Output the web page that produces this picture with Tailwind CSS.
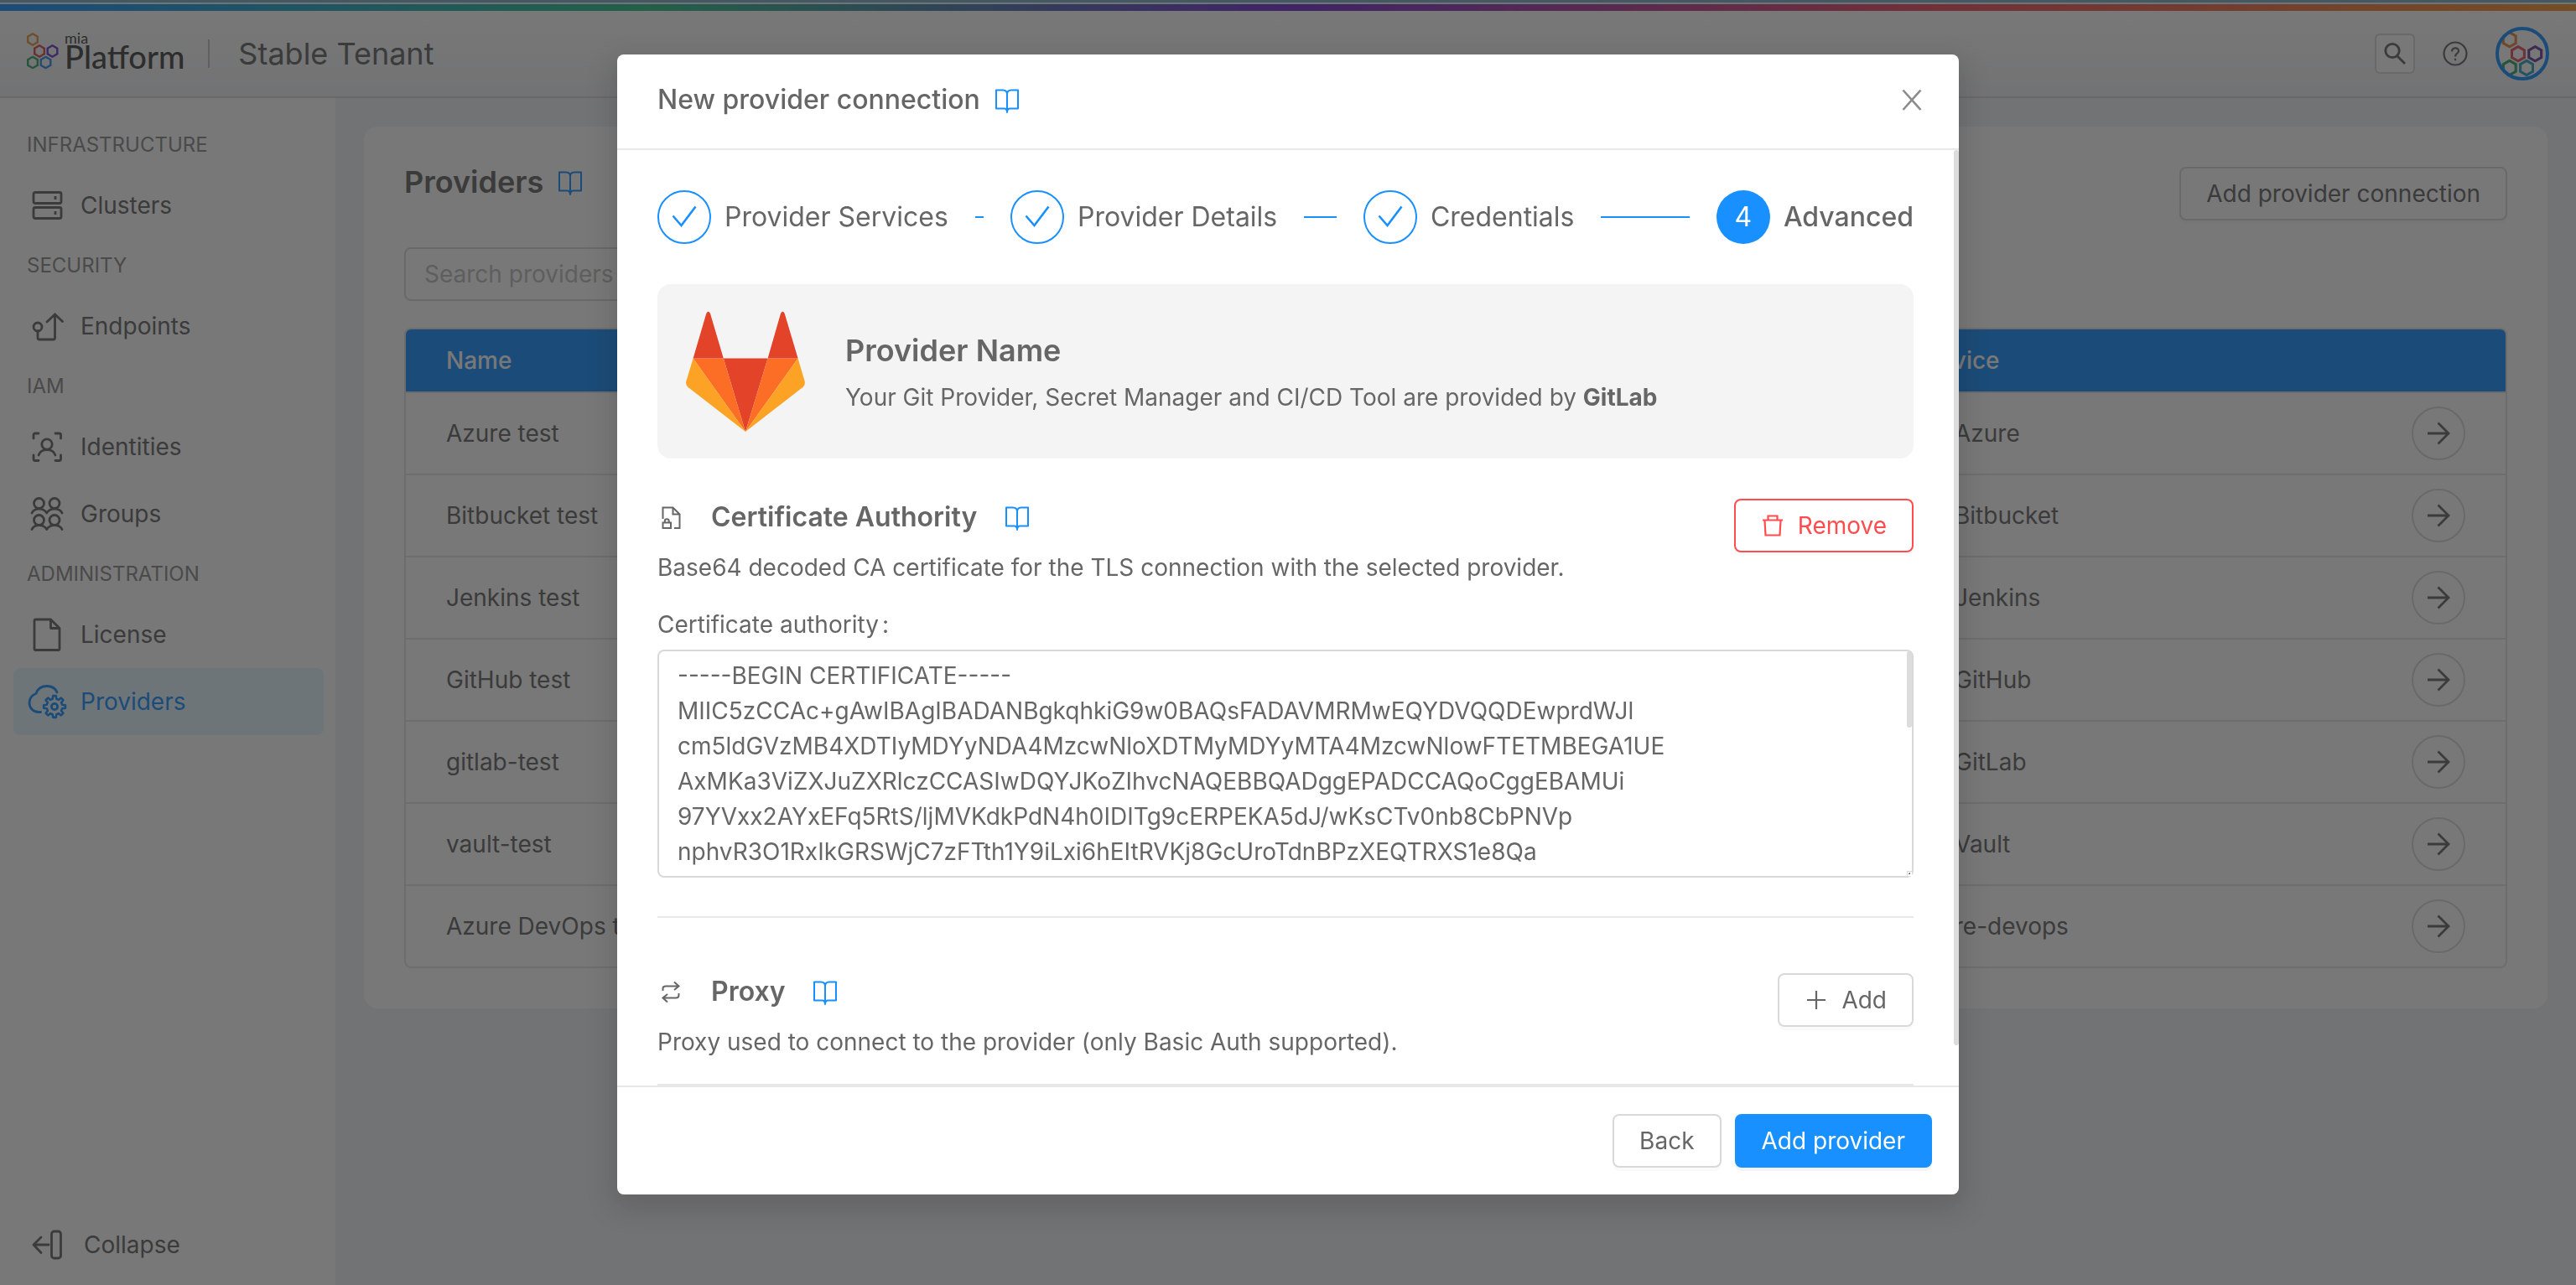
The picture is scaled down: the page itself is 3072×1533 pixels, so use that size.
<!DOCTYPE html>
<html lang="en">
<head>
<meta charset="utf-8">
<title>Stable Tenant - Providers</title>
<script src="https://cdn.jsdelivr.net/npm/@tailwindcss/browser@4"></script>
</head>
<body class="min-h-screen bg-[#f0f2f5] font-['Inter',sans-serif] text-[28px] leading-[44px] text-[#666666]">

<svg class="hidden" aria-hidden="true">
  <symbol id="book" viewBox="0 0 32 32"><path fill="none" stroke="currentColor" stroke-width="2" stroke-linejoin="round" d="M16 9.500C16 6.500 14 4.500 11 4.500H3V26.500H12.500C15 26.500 16 28 16 31C16 28 17 26.500 19.500 26.500H29V4.500H21C18 4.500 16 6.500 16 9.500ZM16 9V31"/></symbol>
  <symbol id="arrow" viewBox="0 0 32 32"><path fill="none" stroke="currentColor" stroke-width="2.800" d="M3 16H28M15.500 3.500 28 16 15.500 28.500"/></symbol>
  <symbol id="check" viewBox="0 0 32 32"><path fill="none" stroke="currentColor" stroke-width="2.600" d="M2.500 14.500 12.500 26 29.500 3.500"/></symbol>
  <symbol id="hex" viewBox="-8 -8 16 16"><path fill="none" stroke="currentColor" stroke-width="2.400" d="M0 -6.700 5.800 -3.350V3.350L0 6.700 -5.800 3.350V-3.350Z"/></symbol>
</svg>

<div class="flex min-h-screen flex-col">
  <div class="h-[3px] bg-[#7fafc5]"></div>
  <div class="h-[2px] bg-[#e6f7ff]"></div>
  <div class="h-2 [background-image:linear-gradient(90deg,#1890ff_0%,#2ac387_25%,#722ed1_50%,#f04a60_75%,#f5962d_100%)]"></div>
  <header class="flex h-[104px] items-center border-b-2 border-[#d9d9d9] bg-linear-to-b from-white to-[#f0f2f5] px-8">
    <a href="#" class="flex items-center text-[#444444]" aria-label="mia Platform">
      <svg class="mb-1 h-[46px] w-[39px]" viewBox="0 0 39 46" aria-hidden="true">
        <use href="#hex" x="-1" y="0" width="16" height="16" class="text-[#e8973c]"/>
        <use href="#hex" x="7" y="14" width="16" height="16" class="text-[#e0494f]"/>
        <use href="#hex" x="22.500" y="14" width="16" height="16" class="text-[#6a3bd0]"/>
        <use href="#hex" x="-1" y="27.500" width="16" height="16" class="text-[#34a866]"/>
        <use href="#hex" x="14.500" y="27.500" width="16" height="16" class="text-[#2f8fe8]"/>
      </svg>
      <span class="flex flex-col pb-[10px] pl-[6px] font-['Lato',sans-serif]">
        <span class="text-[18px] leading-4">mia</span>
        <span class="text-[38px] leading-7 font-medium">Platform</span>
      </span>
    </a>
    <span class="mr-[34px] ml-7 h-[34px] w-[2px] bg-[#c4c4c4]"></span>
    <span class="text-[36px]">Stable Tenant</span>
    <div class="ml-auto flex items-center gap-8">
      <button class="grid size-12 place-items-center rounded-md border-2 border-[#d9d9d9] bg-white" aria-label="Search">
        <svg class="size-7" viewBox="0 0 28 28" fill="none" stroke="currentColor" stroke-width="2.800" aria-hidden="true"><circle cx="11" cy="10.500" r="8.200"/><path d="M16.500 16.500 26 26"/></svg>
      </button>
      <button class="grid size-8 place-items-center" aria-label="Help">
        <svg class="size-8" viewBox="0 0 32 32" fill="none" stroke="currentColor" stroke-width="2.200" aria-hidden="true"><circle cx="16" cy="16" r="13.500"/><path d="M12 13.500C12 8 20 8 20 13C20 16 16 15.500 16 19.500"/><path d="M16 21.800v2.400"/></svg>
      </button>
      <button class="size-16" aria-label="Account">
        <svg class="size-16" viewBox="0 0 64 64" aria-hidden="true">
          <defs><clipPath id="avatar"><circle cx="32" cy="32" r="30"/></clipPath></defs>
          <circle cx="32" cy="32" r="30" fill="#fff"/>
          <g clip-path="url(#avatar)">
            <use href="#hex" x="6.500" y="5" width="20.500" height="20.500" class="text-[#e8873c]"/>
            <use href="#hex" x="16.700" y="22" width="20.500" height="20.500" class="text-[#e55064]"/>
            <use href="#hex" x="37" y="22" width="20.500" height="20.500" class="text-[#6b3f9e]"/>
            <use href="#hex" x="6.500" y="38.700" width="20.500" height="20.500" class="text-[#2ea866]"/>
            <use href="#hex" x="26.800" y="38.700" width="20.500" height="20.500" class="text-[#2ba5c4]"/>
          </g>
          <circle cx="32" cy="32" r="30" fill="none" stroke="#1890ff" stroke-width="4"/>
        </svg>
      </button>
    </div>
  </header>

  <div class="flex flex-1">
    <aside class="flex w-[400px] shrink-0 flex-col bg-white">
      <nav class="flex flex-1 flex-col pt-6">
        <h2 class="flex h-16 items-center pl-8 text-[24px] text-[#8c8c8c]">INFRASTRUCTURE</h2>
        <a href="#" class="mr-[14px] ml-4 flex h-20 items-center gap-5 rounded-lg pl-5">
          <svg class="size-10" viewBox="0 0 40 40" fill="none" stroke="currentColor" stroke-width="2.800" aria-hidden="true"><rect x="4" y="4.500" width="33" height="13" rx="2"/><rect x="4" y="22.500" width="33" height="13" rx="2"/><path d="M30 9v4M30 27v4"/></svg>
          Clusters</a>
        <h2 class="flex h-16 items-center pl-8 text-[24px] text-[#8c8c8c]">SECURITY</h2>
        <a href="#" class="mr-[14px] ml-4 flex h-20 items-center gap-5 rounded-lg pl-5">
          <svg class="size-10" viewBox="0 0 40 40" fill="none" stroke="currentColor" stroke-width="2.800" stroke-linecap="round" stroke-linejoin="round" aria-hidden="true"><circle cx="9" cy="21" r="5"/><path d="M9 26V34Q9 36 11 36H27.500Q29.500 36 29.500 34V6M20 15 29.500 6 38.500 14.500"/></svg>
          Endpoints</a>
        <h2 class="flex h-16 items-center pl-8 text-[24px] text-[#8c8c8c]">IAM</h2>
        <a href="#" class="mr-[14px] ml-4 flex h-20 items-center gap-5 rounded-lg pl-5">
          <svg class="size-10" viewBox="0 0 40 40" fill="none" stroke="currentColor" stroke-width="2.800" stroke-linecap="round" stroke-linejoin="round" aria-hidden="true"><path d="M4 10V6Q4 4 6 4H10M30 4H34.500Q36.500 4 36.500 6V10M4 30V34.500Q4 36.500 6 36.500H10M30 36.500H34.500Q36.500 36.500 36.500 34.500V30"/><circle cx="20" cy="17" r="6.200"/><path d="M10 30C13 21.500 27 21.500 30 30"/></svg>
          Identities</a>
        <a href="#" class="mr-[14px] ml-4 flex h-20 items-center gap-5 rounded-lg pl-5">
          <svg class="size-10" viewBox="0 0 40 40" fill="none" stroke="currentColor" stroke-width="2.800" stroke-linecap="round" stroke-linejoin="round" aria-hidden="true"><circle cx="10.500" cy="7.500" r="6"/><circle cx="29" cy="7.500" r="6"/><path d="M2 19C5 12.500 16 12.500 19.700 19C23.500 12.500 35 12.500 38 19"/><circle cx="10.500" cy="27.500" r="6"/><circle cx="29" cy="27.500" r="6"/><path d="M2 38.500C5 32 16 32 19.700 38.500C23.500 32 35 32 38 38.500"/></svg>
          Groups</a>
        <h2 class="flex h-16 items-center pl-8 text-[24px] text-[#8c8c8c]">ADMINISTRATION</h2>
        <a href="#" class="mr-[14px] ml-4 flex h-20 items-center gap-5 rounded-lg pl-5">
          <svg class="size-10" viewBox="0 0 40 40" fill="none" stroke="currentColor" stroke-width="2.800" stroke-linejoin="round" aria-hidden="true"><path d="M5 3.500Q5 2 6.500 2H24.500L35 12.500V37Q35 38.500 33.500 38.500H6.500Q5 38.500 5 37ZM24.500 2V12.500H35"/></svg>
          License</a>
        <a href="#" aria-current="page" class="mr-[14px] ml-4 flex h-20 items-center gap-5 rounded-lg bg-[#e6f7ff] pl-5 text-[#1890ff]">
          <svg class="size-10 overflow-visible" viewBox="0 0 40 40" fill="none" stroke="currentColor" stroke-width="2.800" stroke-linecap="round" stroke-linejoin="round" aria-hidden="true"><path d="M12.500 32.500H10C3.500 32.500 -1 27.500 -1 21.500C-1 15.500 3 11.500 7 10.500C9 4.500 14 1.500 20 1.500C26 1.500 30 4 32 9"/><g transform="translate(29 26)"><path stroke-width="2.600" d="M9.200 -2.300 12.900 -1.800 12.900 1.800 9.200 2.300 8.100 4.900 10.400 7.800 7.800 10.400 4.900 8.100 2.300 9.200 1.800 12.900 -1.800 12.900 -2.300 9.200 -4.900 8.100 -7.800 10.400 -10.400 7.800 -8.100 4.900 -9.200 2.300 -12.900 1.800 -12.900 -1.800 -9.200 -2.300 -8.100 -4.900 -10.400 -7.800 -7.800 -10.400 -4.900 -8.100 -2.300 -9.200 -1.800 -12.900 1.800 -12.900 2.300 -9.200 4.900 -8.100 7.800 -10.400 10.400 -7.800 8.100 -4.900Z"/><circle r="3.600"/></g></svg>
          Providers</a>
      </nav>
      <button class="flex h-24 items-center gap-6 pl-9 text-left">
        <svg class="size-10" viewBox="0 0 40 40" fill="none" stroke="currentColor" stroke-width="2.800" stroke-linecap="round" stroke-linejoin="round" aria-hidden="true"><path d="M13 11 4 20 13 29.500M4 20H22"/><rect x="25.500" y="4" width="11" height="32" rx="3"/></svg>
        Collapse
      </button>
    </aside>

    <main class="min-w-0 flex-1 p-[34px]">
      <section class="rounded-2xl bg-white p-12">
        <div class="flex h-24 items-start justify-between">
          <div class="flex items-center gap-4">
            <h1 class="text-[36px] leading-9 font-semibold">Providers</h1>
            <a href="#" class="text-[#1890ff]" aria-label="Documentation"><svg class="size-8" aria-hidden="true"><use href="#book"/></svg></a>
          </div>
          <button class="h-16 rounded-lg border-2 border-[#d9d9d9] bg-white px-[30px] shadow-[0_4px_0_rgba(0,0,0,0.02)]">Add provider connection</button>
        </div>
        <input type="text" aria-label="Search providers" placeholder="Search providers" class="mb-8 block h-16 w-[480px] rounded-lg border-2 border-[#d9d9d9] bg-white px-[22px] placeholder:text-[#bfbfbf]">
        <div class="overflow-hidden rounded-lg border-2 border-[#e4e4e4]">
          <table class="w-full table-fixed text-left">
            <colgroup><col class="w-1/4"><col><col class="w-[753px]"></colgroup>
            <thead class="bg-[#1890ff] text-white">
              <tr class="h-[75px] border-b-2 border-[#e4e4e4]"><th class="pl-12 font-medium">Name</th><th></th><th class="pl-12 font-medium">Service</th></tr>
            </thead>
            <tbody>
              <tr class="h-[98px] border-b-2 border-[#e4e4e4]"><td class="pl-12 whitespace-nowrap">Azure test</td><td></td><td class="px-12"><div class="flex items-center gap-4"><span class="size-8"></span>Azure<button class="ml-auto grid size-16 place-items-center rounded-full border-2 border-[#d9d9d9]" aria-label="Open Azure test"><svg class="size-8" aria-hidden="true"><use href="#arrow"/></svg></button></div></td></tr>
              <tr class="h-[98px] border-b-2 border-[#e4e4e4]"><td class="pl-12 whitespace-nowrap">Bitbucket test</td><td></td><td class="px-12"><div class="flex items-center gap-4"><span class="size-8"></span>Bitbucket<button class="ml-auto grid size-16 place-items-center rounded-full border-2 border-[#d9d9d9]" aria-label="Open Bitbucket test"><svg class="size-8" aria-hidden="true"><use href="#arrow"/></svg></button></div></td></tr>
              <tr class="h-[98px] border-b-2 border-[#e4e4e4]"><td class="pl-12 whitespace-nowrap">Jenkins test</td><td></td><td class="px-12"><div class="flex items-center gap-4"><span class="size-8"></span>Jenkins<button class="ml-auto grid size-16 place-items-center rounded-full border-2 border-[#d9d9d9]" aria-label="Open Jenkins test"><svg class="size-8" aria-hidden="true"><use href="#arrow"/></svg></button></div></td></tr>
              <tr class="h-[98px] border-b-2 border-[#e4e4e4]"><td class="pl-12 whitespace-nowrap">GitHub test</td><td></td><td class="px-12"><div class="flex items-center gap-4"><span class="size-8"></span>GitHub<button class="ml-auto grid size-16 place-items-center rounded-full border-2 border-[#d9d9d9]" aria-label="Open GitHub test"><svg class="size-8" aria-hidden="true"><use href="#arrow"/></svg></button></div></td></tr>
              <tr class="h-[98px] border-b-2 border-[#e4e4e4]"><td class="pl-12 whitespace-nowrap">gitlab-test</td><td></td><td class="px-12"><div class="flex items-center gap-4"><span class="size-8"></span>GitLab<button class="ml-auto grid size-16 place-items-center rounded-full border-2 border-[#d9d9d9]" aria-label="Open gitlab-test"><svg class="size-8" aria-hidden="true"><use href="#arrow"/></svg></button></div></td></tr>
              <tr class="h-[98px] border-b-2 border-[#e4e4e4]"><td class="pl-12 whitespace-nowrap">vault-test</td><td></td><td class="px-12"><div class="flex items-center gap-4"><span class="size-8"></span>Vault<button class="ml-auto grid size-16 place-items-center rounded-full border-2 border-[#d9d9d9]" aria-label="Open vault-test"><svg class="size-8" aria-hidden="true"><use href="#arrow"/></svg></button></div></td></tr>
              <tr class="h-[97px]"><td class="pl-12 whitespace-nowrap">Azure DevOps test</td><td></td><td class="px-12"><div class="flex items-center gap-4">azure-devops<button class="ml-auto grid size-16 place-items-center rounded-full border-2 border-[#d9d9d9]" aria-label="Open Azure DevOps test"><svg class="size-8" aria-hidden="true"><use href="#arrow"/></svg></button></div></td></tr>
            </tbody>
          </table>
        </div>
      </section>
    </main>
  </div>
</div>

<div class="fixed inset-0 flex justify-center bg-[#1e1e1e]/60 px-8 pt-[65px] pb-[108px]">
  <div role="dialog" aria-modal="true" aria-labelledby="dialog-title" class="flex w-full max-w-[1600px] flex-col overflow-hidden rounded-lg bg-white shadow-[0_12px_32px_8px_rgba(0,0,0,0.12)]">
    <div class="flex h-[114px] shrink-0 items-center gap-4 border-b-2 border-[#e8e8e8] pr-2 pb-1 pl-12">
      <h2 id="dialog-title" class="text-[32px] font-medium">New provider connection</h2>
      <a href="#" class="text-[#1890ff]" aria-label="Documentation"><svg class="size-8" aria-hidden="true"><use href="#book"/></svg></a>
      <button class="ml-auto grid size-24 place-items-center text-[#8c8c8c]" aria-label="Close"><svg class="size-8" viewBox="0 0 32 32" fill="none" stroke="currentColor" stroke-width="2.600" aria-hidden="true"><path d="M5.500 4.500 26.500 28M26.500 4.500 5.500 28"/></svg></button>
    </div>

    <div class="relative flex min-h-0 flex-1 flex-col">
      <div class="min-h-0 flex-1 overflow-y-auto pr-[6px] [scrollbar-width:none]">
        <div class="px-12 pt-12">
          <ol class="flex gap-8 text-[32px] whitespace-nowrap">
            <li class="flex flex-1 items-center gap-4"><span class="grid size-16 shrink-0 place-items-center rounded-full border-2 border-[#1890ff] text-[#1890ff]"><svg class="size-8" aria-hidden="true"><use href="#check"/></svg></span>Provider Services<span class="ml-4 h-[2px] flex-1 bg-[#1890ff]"></span></li>
            <li class="flex flex-1 items-center gap-4"><span class="grid size-16 shrink-0 place-items-center rounded-full border-2 border-[#1890ff] text-[#1890ff]"><svg class="size-8" aria-hidden="true"><use href="#check"/></svg></span>Provider Details<span class="ml-4 h-[2px] flex-1 bg-[#1890ff]"></span></li>
            <li class="flex flex-1 items-center gap-4"><span class="grid size-16 shrink-0 place-items-center rounded-full border-2 border-[#1890ff] text-[#1890ff]"><svg class="size-8" aria-hidden="true"><use href="#check"/></svg></span>Credentials<span class="ml-4 h-[2px] flex-1 bg-[#1890ff]"></span></li>
            <li aria-current="step" class="flex items-center gap-4 font-medium"><span class="grid size-16 shrink-0 place-items-center rounded-full bg-[#1890ff] font-normal text-white">4</span>Advanced</li>
          </ol>

          <div class="mt-12 flex items-center gap-10 rounded-2xl bg-[#f4f4f4] p-6">
            <svg class="size-40" viewBox="0 0 160 160" aria-hidden="true">
              <path fill="#e24329" d="M81 152 107.600 64.500H54.800Z"/>
              <path fill="#fc6d26" d="M81 152 54.800 64.500H18.600Z"/>
              <path fill="#fca326" d="M18.600 64.500 10.300 92Q9.500 96 12 98.500L81 152Z"/>
              <path fill="#e24329" d="M18.600 64.500H54.800L39 11Q36.700 6.500 34.300 11Z"/>
              <path fill="#fc6d26" d="M81 152 107.600 64.500H143.600Z"/>
              <path fill="#fca326" d="M143.600 64.500 151.700 92Q152.500 96 150 98.500L81 152Z"/>
              <path fill="#e24329" d="M143.600 64.500H107.600L123 11Q125.300 6.500 127.700 11Z"/>
            </svg>
            <div class="pt-[6px]">
              <h3 class="mb-3 text-[36px] font-semibold">Provider Name</h3>
              <p>Your Git Provider, Secret Manager and CI/CD Tool are provided by <strong class="font-bold">GitLab</strong></p>
            </div>
          </div>

          <section class="mt-12 border-b-2 border-[#e8e8e8] pb-[46px]">
            <div class="flex items-start justify-between">
              <div>
                <div class="flex items-center gap-8">
                  <svg class="size-8" viewBox="0 0 32 32" fill="none" stroke="currentColor" stroke-width="2" aria-hidden="true"><path d="M6.500 18V4.500H18.500L26.500 12.500V29H20M18.500 4.500V12.500H26.500"/><rect x="6.500" y="22.500" width="9.500" height="6.500"/><path d="M8.800 22V20.500C8.800 17.500 13.700 17.500 13.700 20.500V22"/></svg>
                  <h3 class="text-[32px] font-semibold">Certificate Authority</h3>
                  <a href="#" class="text-[#1890ff]" aria-label="Certificate documentation"><svg class="size-8" aria-hidden="true"><use href="#book"/></svg></a>
                </div>
                <p class="mt-4">Base64 decoded CA certificate for the TLS connection with the selected provider.</p>
              </div>
              <button class="flex h-16 items-center gap-4 rounded-lg border-2 border-[#ff4d4f] px-[30px] text-[#ff4d4f] shadow-[0_4px_0_rgba(0,0,0,0.02)]"><svg class="size-7" viewBox="0 0 28 28" fill="none" stroke="currentColor" stroke-width="2.200" aria-hidden="true"><path d="M2 7.500H26M8.500 7V2.500H19.500V7M4.500 8 5.500 25.500H22.500L23.500 8"/></svg>Remove</button>
            </div>
            <label for="ca" class="mt-6 mb-2 block">Certificate authority<span class="ml-1">:</span></label>
            <div class="relative">
              <textarea id="ca" spellcheck="false" class="block h-[272px] w-full resize-none overflow-y-auto rounded-lg border-2 border-[#d9d9d9] px-[22px] py-2 leading-[42px] [scrollbar-width:none]">-----BEGIN CERTIFICATE-----
MIIC5zCCAc+gAwIBAgIBADANBgkqhkiG9w0BAQsFADAVMRMwEQYDVQQDEwprdWJl
cm5ldGVzMB4XDTIyMDYyNDA4MzcwNloXDTMyMDYyMTA4MzcwNlowFTETMBEGA1UE
AxMKa3ViZXJuZXRlczCCASIwDQYJKoZIhvcNAQEBBQADggEPADCCAQoCggEBAMUi
97YVxx2AYxEFq5RtS/ljMVKdkPdN4h0IDITg9cERPEKA5dJ/wKsCTv0nb8CbPNVp
nphvR3O1RxIkGRSWjC7zFTth1Y9iLxi6hEItRVKj8GcUroTdnBPzXEQTRXS1e8Qa
b2Vt0tWcQ1nZkq8sXyJr4uLw7hDgF5mKp3vTaE6iNxRzOjYBqCfSd9HlUwAgMeVk
Jt2PzXo7rWbI5nQyGcLs1uDhE8vKaFmT4xRpNjYiBwOqZfCd3HgUlSkAeMtVb6Jr
PzX9oWnIyQ7cLGs5uDhKvEaF1mTxRp4NjYiBOwqZCf8dHgUl2SkAMetVbJr6PzXo
WnI3yQcLG7s1uDhKvEaFmTxR5pNjYiB9OwqZCfdH4gUlSkAMetVbJrPz8XoWnIyQ
cLGs2uDhKvEa6FmTxRpNjYiBOwqZCfdHgUl1SkAMetVbJr7PzXoWnIyQcLGsuDh5
KvEaFm3TxRpNjYiB8OwqZCfdHgUlSkAMetV9bJrPzXoWnIyQcLGsuD4hKvEaFmTx
RpNj6YiBOwqZCfdHgUl7SkAMetVbJrPzXoWnIyQ2cLGsuDhKvEaFmTxRpN1jYiBO
wqZC5fdHgUlSkAMe3tVbJrPzXoWnIyQcLGsuDhKv8EaFmTxRpNjYiBOwqZCfdHgU
lSkAMetV4bJrPzXoWnI9yQcLGsuDhKvEaFmTxRpNjYi6BOwqZCfdHgUlSkAMetVb
JrPzXoWnIyQcLGsuDhKvEaFmTxRpNjYiBOwqZCfdHgUlSkAMetVbJrPzXoWnIyQc
LGsuDhKvEaFmTxRpNjYi
-----END CERTIFICATE-----</textarea>
              <span class="absolute top-[2px] right-[2px] h-[91px] w-[6px] rounded-[3px] bg-[#dcdcdc]" aria-hidden="true"></span>
              <span class="absolute right-[2px] bottom-[2px] size-[6px] border-t border-l border-[#d9d9d9] bg-[radial-gradient(#666_1px,#fff_1px)]" aria-hidden="true"></span>
            </div>
          </section>

          <section class="border-b-2 border-[#e8e8e8] pt-[66px] pb-7">
            <div class="flex items-start justify-between">
              <div>
                <div class="flex items-center gap-8">
                  <svg class="size-8" viewBox="0 0 32 32" fill="none" stroke="currentColor" stroke-width="2" aria-hidden="true"><path d="M6.500 15V12Q6.500 9.500 10 9.500H25.500M20 4.500 25.500 9.500 20 14M25.500 18V20Q25.500 23.500 22 23.500H6.500M12 19 6.500 23.500 12 28.500"/></svg>
                  <h3 class="text-[32px] font-semibold">Proxy</h3>
                  <a href="#" class="text-[#1890ff]" aria-label="Proxy documentation"><svg class="size-8" aria-hidden="true"><use href="#book"/></svg></a>
                </div>
                <p class="mt-4">Proxy used to connect to the provider (only Basic Auth supported).</p>
              </div>
              <button class="flex h-16 items-center gap-4 rounded-lg border-2 border-[#d9d9d9] px-[30px] shadow-[0_4px_0_rgba(0,0,0,0.02)]"><svg class="size-7" viewBox="0 0 28 28" fill="none" stroke="currentColor" stroke-width="2.200" aria-hidden="true"><path d="M14 3V25M3 14H25"/></svg>Add</button>
            </div>
          </section>
          <div class="h-12"></div>
        </div>
      </div>
      <span class="absolute top-0 right-0 bottom-12 w-[6px] rounded-[3px] bg-[#dcdcdc]" aria-hidden="true"></span>
    </div>

    <div class="flex shrink-0 justify-end gap-4 border-t-2 border-[#e8e8e8] p-8">
      <button class="h-16 rounded-lg border-2 border-[#d9d9d9] bg-white px-[30px] shadow-[0_4px_0_rgba(0,0,0,0.02)]">Back</button>
      <button class="h-16 rounded-lg bg-[#1890ff] px-8 text-white shadow-[0_4px_0_rgba(0,0,0,0.04)]">Add provider</button>
    </div>
  </div>
</div>
</body>
</html>
